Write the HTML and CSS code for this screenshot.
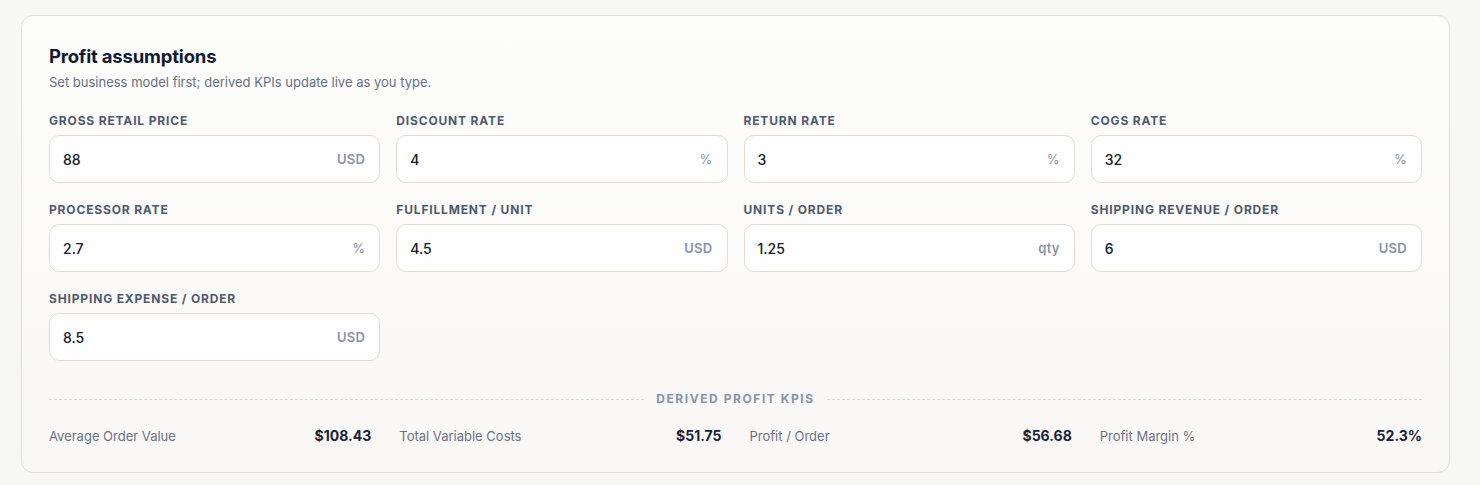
FILE: index.html
```html
<!DOCTYPE html>
<html lang="en">
<head>
  <meta charset="UTF-8">
  <title>Profit assumptions</title>
  <link rel="stylesheet" href="styles.css">
</head>
<body>

  <section class="card">
    <h2 class="card-title">Profit assumptions</h2>
    <p class="card-sub">Set business model first; derived KPIs update live as you type.</p>

    <div class="fields">
      <label class="field">
        <span class="field-label">Gross retail price</span>
        <span class="input"><span class="input-value">88</span><span class="input-unit">USD</span></span>
      </label>
      <label class="field">
        <span class="field-label">Discount rate</span>
        <span class="input"><span class="input-value">4</span><span class="input-unit pct">%</span></span>
      </label>
      <label class="field">
        <span class="field-label">Return rate</span>
        <span class="input"><span class="input-value">3</span><span class="input-unit pct">%</span></span>
      </label>
      <label class="field">
        <span class="field-label">COGS rate</span>
        <span class="input"><span class="input-value">32</span><span class="input-unit pct">%</span></span>
      </label>

      <label class="field">
        <span class="field-label">Processor rate</span>
        <span class="input"><span class="input-value">2.7</span><span class="input-unit pct">%</span></span>
      </label>
      <label class="field">
        <span class="field-label">Fulfillment / unit</span>
        <span class="input"><span class="input-value">4.5</span><span class="input-unit">USD</span></span>
      </label>
      <label class="field">
        <span class="field-label">Units / order</span>
        <span class="input"><span class="input-value">1.25</span><span class="input-unit">qty</span></span>
      </label>
      <label class="field">
        <span class="field-label">Shipping revenue / order</span>
        <span class="input"><span class="input-value">6</span><span class="input-unit">USD</span></span>
      </label>

      <label class="field">
        <span class="field-label">Shipping expense / order</span>
        <span class="input"><span class="input-value">8.5</span><span class="input-unit">USD</span></span>
      </label>
    </div>

    <div class="divider"><span>Derived profit KPIs</span></div>

    <div class="kpis">
      <div class="kpi"><span class="kpi-label">Average Order Value</span><span class="kpi-value">$108.43</span></div>
      <div class="kpi"><span class="kpi-label">Total Variable Costs</span><span class="kpi-value">$51.75</span></div>
      <div class="kpi"><span class="kpi-label">Profit / Order</span><span class="kpi-value">$56.68</span></div>
      <div class="kpi"><span class="kpi-label">Profit Margin %</span><span class="kpi-value">52.3%</span></div>
    </div>
  </section>

</body>
</html>
```

FILE: styles.css
```css
body {
  font-family: Inter, 'Noto Sans', sans-serif;
  background-color: #f7f7f6;
  margin: 0;
  padding: 15px 30px 13px 21px;
  color: #0f1b33;
}

.card {
  background: linear-gradient(180deg, #fdfdfc 0%, #f9f8f6 100%);
  border: 1px solid #e3dfd8;
  border-radius: 12px;
  padding: 28px 27px 27px 27px;
}

.card-title {
  font-size: 18.5px;
  line-height: 24px;
  font-weight: 700;
  margin: 0;
  color: #0f1b33;
  letter-spacing: -0.01em;
}

.card-sub {
  font-size: 13px;
  line-height: 18px;
  color: #667085;
  margin: 5px 0 23px;
}

.fields {
  display: grid;
  grid-template-columns: repeat(4, 1fr);
  column-gap: 16px;
  row-gap: 20px;
}

.field {
  display: flex;
  flex-direction: column;
  gap: 7px;
}

.field-label {
  font-size: 12px;
  line-height: 14px;
  font-weight: 700;
  text-transform: uppercase;
  letter-spacing: 0.07em;
  color: #4f5a6e;
}

.input {
  display: flex;
  align-items: center;
  justify-content: space-between;
  height: 46px;
  padding: 0 14px 0 13px;
  background-color: #fefefe;
  border: 1px solid #e2dcd3;
  border-radius: 10px;
}

.input-value {
  font-size: 14px;
  font-weight: 500;
  color: #111827;
}

.input-unit {
  font-size: 13px;
  font-weight: 600;
  color: #8a94a6;
  letter-spacing: 0.02em;
}

.input-unit.pct {
  font-weight: 400;
}

.divider {
  display: flex;
  align-items: center;
  gap: 12px;
  margin-top: 31px;
  height: 14px;
}

.divider::before,
.divider::after {
  content: "";
  flex: 1;
  border-top: 1px dashed #dcd8d2;
}

.divider span {
  font-size: 12px;
  line-height: 14px;
  font-weight: 700;
  text-transform: uppercase;
  letter-spacing: 0.13em;
  color: #8a94a6;
}

.kpis {
  display: grid;
  grid-template-columns: repeat(4, 1fr);
  column-gap: 28px;
  margin-top: 21px;
}

.kpi {
  display: flex;
  justify-content: space-between;
  align-items: center;
  line-height: 18px;
}

.kpi-label {
  font-size: 13px;
  color: #6b7385;
}

.kpi-value {
  font-size: 14px;
  font-weight: 700;
  color: #17223b;
}
```
